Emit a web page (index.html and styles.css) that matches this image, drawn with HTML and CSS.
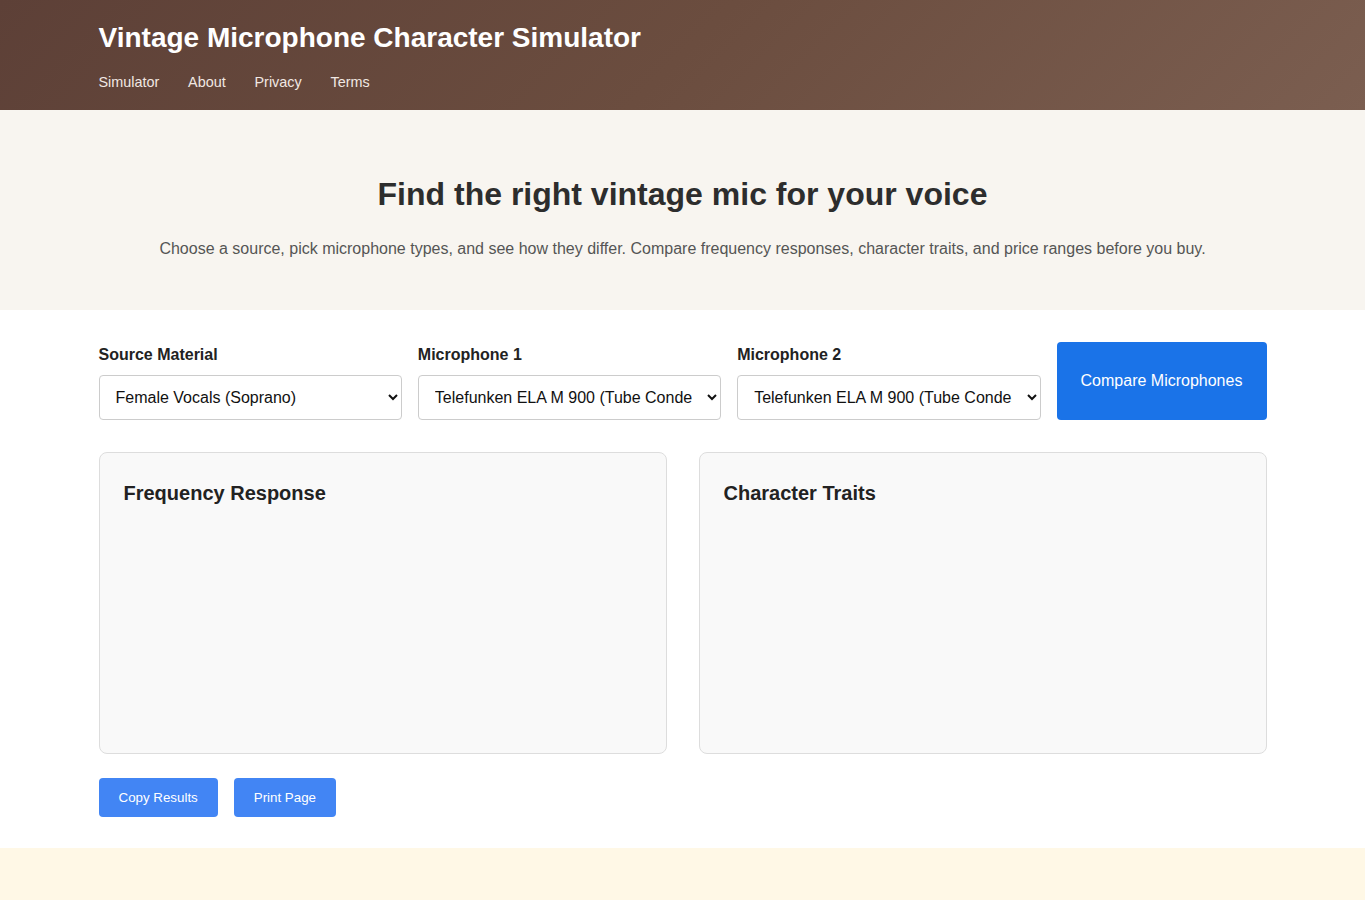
FILE: index.html
```html
<!DOCTYPE html>
<html lang="en">
<head>
<meta charset="utf-8">
<title>Vintage Microphone Character Simulator</title>
<link rel="stylesheet" href="styles.css">
</head>
<body>
<header class="site-header">
  <div class="container">
    <h1 class="site-title">Vintage Microphone Character Simulator</h1>
    <nav class="site-nav">
      <a href="#">Simulator</a>
      <a href="#">About</a>
      <a href="#">Privacy</a>
      <a href="#">Terms</a>
    </nav>
  </div>
</header>
<section class="hero">
  <div class="container">
    <h2 class="hero-title">Find the right vintage mic for your voice</h2>
    <p class="hero-text">Choose a source, pick microphone types, and see how they differ. Compare frequency responses, character traits, and price ranges before you buy.</p>
  </div>
</section>
<main class="main">
  <div class="container">
    <div class="controls">
      <div class="field">
        <label class="field-label" for="src">Source Material</label>
        <select id="src" class="field-select">
          <option>Female Vocals (Soprano)</option>
        </select>
      </div>
      <div class="field">
        <label class="field-label" for="m1">Microphone 1</label>
        <select id="m1" class="field-select">
          <option>Telefunken ELA M 900 (Tube Condenser)</option>
        </select>
      </div>
      <div class="field">
        <label class="field-label" for="m2">Microphone 2</label>
        <select id="m2" class="field-select">
          <option>Telefunken ELA M 900 (Tube Condenser)</option>
        </select>
      </div>
      <button class="compare-btn" type="button">Compare Microphones</button>
    </div>
    <div class="cards">
      <div class="card">
        <h3 class="card-title">Frequency Response</h3>
      </div>
      <div class="card">
        <h3 class="card-title">Character Traits</h3>
      </div>
    </div>
    <div class="actions">
      <button class="action-btn" type="button">Copy Results</button>
      <button class="action-btn" type="button">Print Page</button>
    </div>
  </div>
</main>
<footer class="footer"></footer>
</body>
</html>
```
FILE: styles.css
```css
* { box-sizing: border-box; }
html, body { margin: 0; padding: 0; }
body {
  font-family: "Liberation Sans", Arial, sans-serif;
  color: #222;
  background: #fff;
}
.container {
  max-width: 1200px;
  margin: 0 auto;
  padding: 0 16px;
}
.site-header {
  background: linear-gradient(135deg, #5d4037 0%, #6b4d3f 50%, #7b5e50 100%);
  color: #fff;
  padding: 21px 0 20px;
  height: 110px;
}
.site-title {
  margin: 0;
  font-size: 28px;
  line-height: 34px;
  font-weight: 700;
}
.site-nav {
  display: flex;
  gap: 28.8px;
  margin-top: 18px;
}
.site-nav a {
  color: #f1e8e3;
  text-decoration: none;
  font-size: 14.4px;
  line-height: 18px;
}
.hero {
  background: #f8f5f0;
  height: 200px;
  padding-top: 65px;
  text-align: center;
}
.hero-title {
  margin: 0;
  font-size: 32px;
  line-height: 38px;
  color: #2d2d2d;
  font-weight: 700;
}
.hero-text {
  margin: 26px 0 0;
  font-size: 16px;
  line-height: 20px;
  color: #555;
}
.main {
  padding: 32px 0 31px;
}
.controls {
  display: grid;
  grid-template-columns: 1fr 1fr 1fr 210px;
  gap: 16px;
}
.field {
  display: flex;
  flex-direction: column;
  gap: 8px;
}
.field-label {
  font-size: 16px;
  font-weight: 700;
  line-height: 24px;
  color: #222;
  padding-top: 1px;
}
.field-select {
  height: 45px;
  border: 1px solid #ccc;
  border-radius: 4px;
  background: #fff;
  padding: 0 12px 0 12px;
  font-family: "Liberation Sans", Arial, sans-serif;
  font-size: 16px;
  color: #111;
  width: 100%;
}
.compare-btn {
  background: #1a73e8;
  color: #fff;
  border: none;
  border-radius: 4px;
  font-family: "Liberation Sans", Arial, sans-serif;
  font-size: 16px;
  padding: 0 16px;
}
.cards {
  display: grid;
  grid-template-columns: 1fr 1fr;
  gap: 32px;
  margin-top: 32px;
}
.card {
  background: #f9f9f9;
  border: 1px solid #ddd;
  border-radius: 8px;
  height: 302px;
  padding: 28px 24px 24px;
}
.card-title {
  margin: 0;
  font-size: 20px;
  line-height: 24px;
  font-weight: 700;
  color: #222;
}
.actions {
  display: flex;
  gap: 16px;
  margin-top: 24px;
}
.action-btn {
  background: #4285f4;
  color: #fff;
  border: none;
  border-radius: 4px;
  font-family: "Liberation Sans", Arial, sans-serif;
  font-size: 13.333px;
  line-height: 17px;
  padding: 11px 20px;
}
.footer {
  background: #fff8e6;
  height: 60px;
}
```
